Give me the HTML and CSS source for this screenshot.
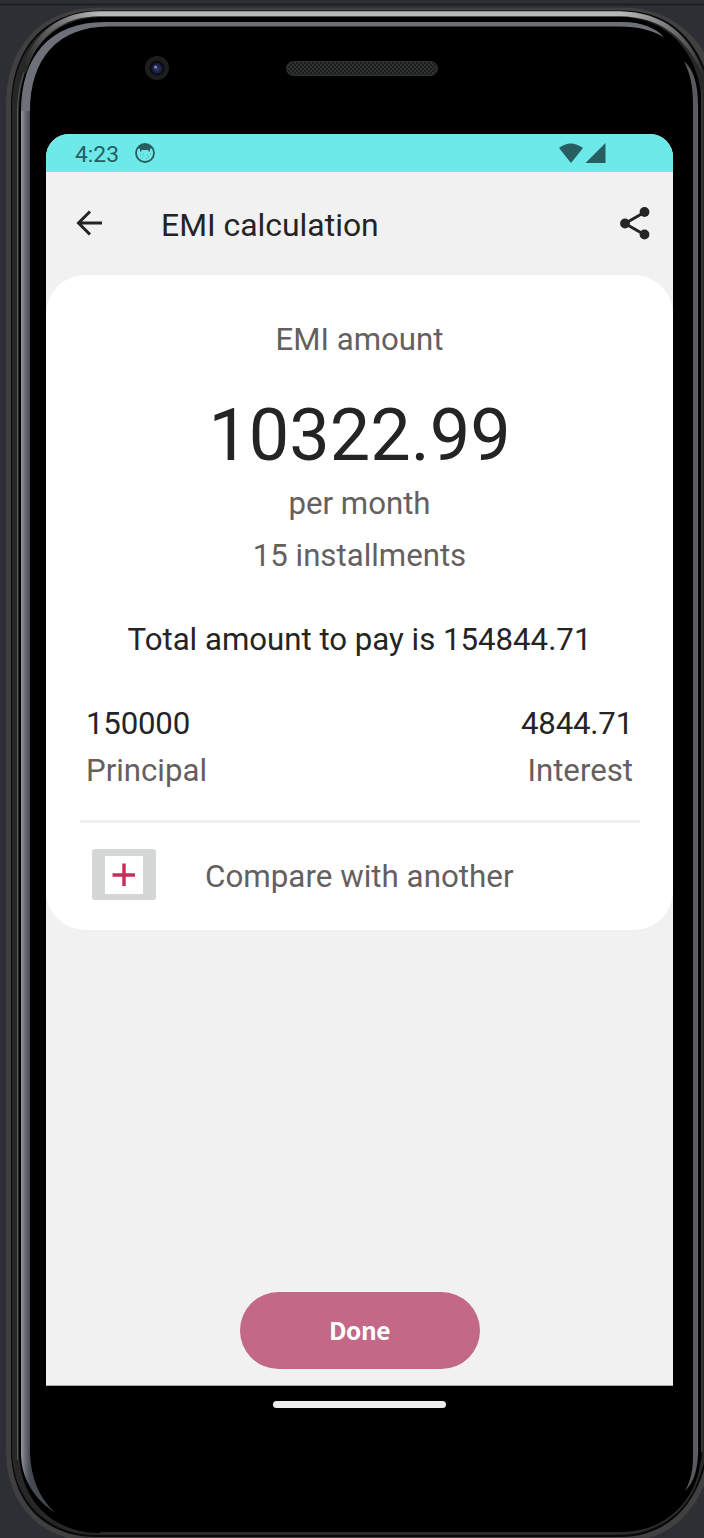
FILE: index.html
```html
<!DOCTYPE html>
<html lang="en">
<head>
<meta charset="utf-8">
<title>EMI calculation</title>
<link rel="stylesheet" href="styles.css">
</head>
<body>
<div class="device">
  <svg class="frame" width="704" height="1538" viewBox="0 0 704 1538" fill="none" aria-hidden="true">
    <defs>
      <linearGradient id="metal" x1="21" y1="0" x2="30" y2="0" gradientUnits="userSpaceOnUse">
        <stop offset="0" stop-color="#92959c"/><stop offset=".5" stop-color="#676a73"/><stop offset="1" stop-color="#454952"/>
      </linearGradient>
      <linearGradient id="shineLeft" x1="26" y1="66" x2="100" y2="14" gradientUnits="userSpaceOnUse">
        <stop offset="0" stop-color="#272727"/><stop offset=".6" stop-color="#777"/><stop offset="1" stop-color="#b8b8ba"/>
      </linearGradient>
      <linearGradient id="shineRight" x1="620" y1="14" x2="704" y2="80" gradientUnits="userSpaceOnUse">
        <stop offset="0" stop-color="#b8b8ba"/><stop offset=".55" stop-color="#666"/><stop offset="1" stop-color="#272727"/>
      </linearGradient>
      <pattern id="mesh" width="4" height="4" patternUnits="userSpaceOnUse">
        <rect width="4" height="4" fill="#1b1c1c"/><path d="M0 0h2v2H0zM2 2h2v2H2z" fill="#303232"/>
      </pattern>
      <radialGradient id="lens"><stop offset="0" stop-color="#334070"/><stop offset=".75" stop-color="#151b3b"/><stop offset="1" stop-color="#090b14"/></radialGradient>
    </defs>
    <path d="M0 4.500H704" stroke="#1d1e21" stroke-width="2"/>
    <path d="M6 105C6 45 42 8 100 7.500H622C665 8 697 30 713 70V1450C705 1510 670 1542 620 1542H95C40 1540 6 1505 6 1450Z" fill="#413f3f"/>
    <path d="M11 108C11 48 44 11 101 10.500H622C666 11 694 34 709 80V1448C700 1504 668 1537 620 1537H95C46 1537 11 1503 11 1450Z" fill="#080808"/>
    <path d="M12 109C12 50 45 12 102 11.500H622C665 12 693 36 708 82V1446C698 1501 666 1535 620 1535H95C48 1535 12 1501 12 1450Z" fill="#272727"/>
    <path d="M19 112C20 54 50 17 104 17H620C668 17 702 54 702 110V1450C700 1500 670 1533 620 1533H100C52 1533 19 1500 19 1450Z" fill="#000"/>
    <path d="M17.500 1460V112C18 68 38 36 66 23" stroke="#555657"/>
    <path d="M24 72C35 33 62 14 100 13.800" stroke="url(#shineLeft)" stroke-width="5"/>
    <path d="M100 11.300H620C665 12 694 37 706 82C688 38 662 17 620 16.300H100Z" fill="url(#shineRight)"/>
    <path d="M702 1460C697 1500 668 1533 620 1533H100" stroke="#2b2b2b" stroke-width="2"/>
    <path d="M702 90V1452" stroke="#353535" stroke-width="2"/>
    <path d="M21 112C21 56 50 22 105 22H622C642 22 656 28 664 37.500C652 30 638 26.500 620 26.500H108C58 27 30 58 30 112Z" fill="#6d7078"/>
    <path d="M21 111H30V1453C31 1480 40 1499 55 1512.500C34 1499 21 1478 21 1453Z" fill="url(#metal)"/>
    <path d="M684 61C694 70 698 85 698 105V1455C697 1473 693 1483 685 1491C691 1480 693 1470 693 1455V105C693 87 691 76 684 61Z" fill="#59595e"/>
    <path d="M697.500 105V1455" stroke="#66676d"/>
    <circle cx="157" cy="68" r="12" fill="#1d1d1d"/><circle cx="157" cy="68" r="7.500" fill="#0a0b10"/><circle cx="157" cy="68.500" r="6.200" fill="url(#lens)"/><circle cx="155.500" cy="67" r="1.600" fill="#7585ae"/>
    <rect x="286.500" y="61.500" width="151" height="14" rx="7" fill="url(#mesh)" stroke="#303232"/>
  </svg>
  <main class="screen">
    <header class="status">
      <span class="clock">4:23</span>
      <svg class="notice" width="20" height="20" viewBox="0 0 20 20"><circle cx="10" cy="10" r="9" fill="none" stroke="#285e60" stroke-width="1.800"/><path d="M3 5Q10-3 17 5L15 6V8.500H13.500V7H6.500V8.500H5V6Z" fill="#285e60"/><path d="M5 12h1M8 11h1M12 12h1M15 11h1M7 15h1M11 15h1M13 14h1" stroke="#4b9999" stroke-width=".8"/></svg>
      <svg class="signals" width="48" height="21" viewBox="0 0 48 21" fill="#285e60"><path d="M0 5Q11.500-4 24 5L12 20Z"/><path d="M46.500 0V20H26.500Z"/></svg>
    </header>
    <nav class="toolbar">
      <svg width="27" height="26" viewBox="0 0 27 26" fill="none" stroke="#242424" stroke-width="3"><path d="M14 1.500L2.500 13L14 24.500M2.500 13H26"/></svg>
      <h1 class="title">EMI calculation</h1>
      <svg class="share" width="30" height="33" viewBox="0 0 30 33"><path d="M25 5L5 16.500L25 28" fill="none" stroke="#242424" stroke-width="3"/><g fill="#242424"><circle cx="24.500" cy="5" r="4.900"/><circle cx="5" cy="16.500" r="4.900"/><circle cx="24.500" cy="27.500" r="4.900"/></g></svg>
    </nav>
    <section class="card">
      <p class="line label">EMI amount</p>
      <p class="amount">10322.99</p>
      <p class="line month">per month</p>
      <p class="line count">15 installments</p>
      <p class="line total">Total amount to pay is 154844.71</p>
      <div class="split">
        <div><p class="value">150000</p><p class="caption">Principal</p></div>
        <div class="right"><p class="value">4844.71</p><p class="caption">Interest</p></div>
      </div>
      <div class="compare">
        <button class="add" aria-label="Add"><svg width="38" height="38" viewBox="0 0 38 38"><path fill="#fff" d="M0 0h38v38H0z"/><path d="M19 7.500V30M7.500 19H30" stroke="#c82c57" stroke-width="3.400"/></svg></button>
        <span class="compare-text">Compare with another</span>
      </div>
    </section>
    <button class="done">Done</button>
  </main>
  <div class="home"></div>
</div>
</body>
</html>
```
FILE: styles.css
```css
* { box-sizing: border-box; }
body { margin: 0; background: #2d2f34; font-family: Roboto, "Liberation Sans", sans-serif; color: #242424; }
p, h1 { margin: 0; font-weight: 400; }
svg { display: block; flex: none; }
button { border: 0; padding: 0; font-family: inherit; }
.device { position: relative; width: 704px; height: 1538px; overflow: hidden; padding: 134px 31px 0 46px; }
.frame { position: absolute; top: 0; left: 0; }
.screen { position: relative; height: 1252px; background: #f1f1f1; border-radius: 23px 23px 0 0; border-bottom: 1px solid #a8adad; overflow: hidden; display: flex; flex-direction: column; }
.status { height: 38px; flex: none; background: #6ce9e8; display: flex; align-items: center; padding: 0 66px 0 29px; color: #285e60; }
.clock { width: 60px; font-size: 22.8px; line-height: 38px; white-space: nowrap; padding-top: 3px; }
.signals { margin-left: auto; }
.toolbar { height: 103px; flex: none; display: flex; align-items: center; padding: 0 23px 2px 30px; }
.title { margin-left: 58px; padding-top: 5px; font-size: 31.9px; line-height: 40px; }
.share { margin: 2px 0 0 auto; }
.card { height: 655px; flex: none; background: #fff; border-radius: 39px; padding-top: 45px; }
.line { height: 40px; font-size: 31.2px; line-height: 40px; text-align: center; color: #655f60; white-space: nowrap; }
.amount { height: 88px; margin-top: 32px; font-size: 72px; line-height: 88px; text-align: center; }
.month { margin-top: 4px; }
.count { margin-top: 12px; }
.total { margin-top: 44px; color: #242424; }
.split { display: flex; justify-content: space-between; padding: 44px 40px 0; font-size: 31.2px; line-height: 40px; }
.value { letter-spacing: -.2px; }
.right { text-align: right; }
.caption { margin-top: 7px; color: #655f60; }
.compare { margin: 29px 33px 0 34px; height: 106px; border-top: 3px solid #f1f1f1; display: flex; align-items: center; padding-left: 12px; }
.add { width: 64px; height: 51px; border-radius: 3px; background: #d5d7d6; display: grid; place-items: center; }
.compare-text { margin-left: 49px; padding-top: 3px; font-size: 31.35px; color: #655f60; white-space: nowrap; }
.done { width: 240px; height: 77px; margin: auto auto 16px; border-radius: 39px; background: #c46887; color: #fff; font-family: "Noto Sans CJK SC", "Noto Sans", sans-serif; font-size: 24.5px; letter-spacing: -.5px; font-weight: 700; padding-bottom: 2px; }
.home { position: relative; width: 173px; height: 7px; margin: 15px auto 0; border-radius: 4px; background: #ededed; }
```
